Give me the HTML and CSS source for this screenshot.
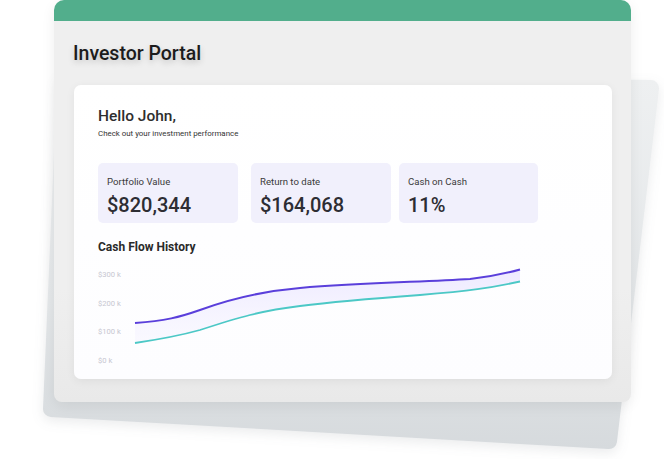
FILE: index.html
```html
<!DOCTYPE html>
<html>
<head>
    <link rel="stylesheet" href="styles.css">
</head>
<body>
    <div class="stage">
        <svg class="backdrop" width="664" height="459" viewBox="0 0 664 459">
            <defs>
                <linearGradient id="backFill" gradientUnits="userSpaceOnUse" x1="0" y1="80" x2="0" y2="449">
                    <stop offset="0" stop-color="#eef0f1"/>
                    <stop offset="0.6" stop-color="#e4e7e9"/>
                    <stop offset="1" stop-color="#d6dadd"/>
                </linearGradient>
            </defs>
            <polygon points="65,83 651,88 609,441 51,409" fill="url(#backFill)" stroke="url(#backFill)" stroke-width="16" stroke-linejoin="round"/>
        </svg>

        <div class="portal-window">
            <div class="portal-header"></div>
            <div class="portal-body">
                <h1 class="portal-title">Investor Portal</h1>

                <div class="dashboard-card">
                    <h2 class="greeting">Hello John,</h2>
                    <p class="greeting-sub">Check out your investment performance</p>

                    <div class="stat-row">
                        <div class="stat-card">
                            <span class="stat-label">Portfolio Value</span>
                            <span class="stat-value">$820,344</span>
                        </div>
                        <div class="stat-card">
                            <span class="stat-label">Return to date</span>
                            <span class="stat-value">$164,068</span>
                        </div>
                        <div class="stat-card stat-card-last">
                            <span class="stat-label">Cash on Cash</span>
                            <span class="stat-value">11%</span>
                        </div>
                    </div>

                    <h3 class="chart-title">Cash Flow History</h3>
                    <div class="chart-row">
                        <div class="chart-axis">
                            <span>$300 k</span>
                            <span>$200 k</span>
                            <span>$100 k</span>
                            <span>$0 k</span>
                        </div>
                        <svg class="chart-svg" width="410" height="110" viewBox="122 262 410 110">
                            <defs>
                                <linearGradient id="bandFill" x1="0" y1="0" x2="0" y2="1">
                                    <stop offset="0" stop-color="#ece8ff" stop-opacity="0.9"/>
                                    <stop offset="1" stop-color="#f4f2ff" stop-opacity="0.4"/>
                                </linearGradient>
                            </defs>
                            <path d="M135 324 C165 322 180 318 200 311 C235 298 265 292 300 289 C360 284 420 283 470 280 C490 278 500 276 520 270.5
                                     L520 282.5 C490 289 470 292 420 296 C380 299 340 302 300 307 C260 312 240 318 200 331 C175 338 155 341 135 344 Z" fill="url(#bandFill)"/>
                            <path d="M135 324 C165 322 180 318 200 311 C235 298 265 292 300 289 C360 284 420 283 470 280 C490 278 500 276 520 270.5" fill="none" stroke="#5a3fdb" stroke-width="2"/>
                            <path d="M135 344 C155 341 175 338 200 331 C240 318 260 312 300 307 C340 302 380 299 420 296 C470 292 490 289 520 282.5" fill="none" stroke="#4cc8c6" stroke-width="1.8"/>
                        </svg>
                    </div>
                </div>
            </div>
        </div>
    </div>
</body>
</html>
```

FILE: styles.css
```css
* {
    margin: 0;
    padding: 0;
    box-sizing: border-box;
}

body {
    font-family: Roboto, "Liberation Sans", Arial, sans-serif;
    background-color: #fff;
}

.stage {
    position: relative;
    width: 664px;
    height: 459px;
    overflow: hidden;
    background: #fff;
}

.backdrop {
    position: absolute;
    left: 0;
    top: 0;
    filter: drop-shadow(0 4px 6px rgba(60, 70, 80, 0.1));
}

.portal-window {
    position: relative;
    z-index: 1;
    margin-left: 54px;
    width: 577px;
    border-radius: 10px;
    box-shadow: 0 4px 14px rgba(0, 0, 0, 0.07);
}

.portal-header {
    height: 21px;
    background-color: #52ae8c;
    border-radius: 10px 10px 0 0;
}

.portal-body {
    height: 381px;
    padding: 21px 19px 0 20px;
    background: linear-gradient(#efefef 70%, #e9e9e9);
    border-radius: 0 0 8px 8px;
}

.portal-title {
    font-size: 19.5px;
    font-weight: 500;
    color: #1c1c1c;
    text-shadow: 0 3px 6px rgba(0, 0, 0, 0.18);
    margin-left: -1px;
}

.dashboard-card {
    margin-top: 20px;
    width: 538px;
    height: 294px;
    padding: 21px 24px 0 24px;
    background: linear-gradient(#ffffff, #fdfdff);
    border-radius: 7px;
    box-shadow: 0 2px 10px rgba(0, 0, 0, 0.06);
}

.greeting {
    font-size: 15.5px;
    font-weight: 500;
    line-height: 20px;
    color: #2e2e2e;
}

.greeting-sub {
    margin-top: 3px;
    font-size: 7.9px;
    line-height: 10px;
    color: #333;
}

.stat-row {
    display: flex;
    gap: 13px;
    margin-top: 24px;
}

.stat-card {
    display: flex;
    flex-direction: column;
    width: 140px;
    height: 60px;
    padding: 13px 9px 0 9px;
    background-color: #f1f0fc;
    border-radius: 5px;
}

.stat-card-last {
    margin-left: -5px;
    width: 139px;
}

.stat-label {
    font-size: 9.6px;
    line-height: 12px;
    color: #3a3a3a;
}

.stat-value {
    margin-top: 5px;
    font-size: 20px;
    font-weight: 500;
    color: #2d2d33;
}

.chart-title {
    margin-top: 17px;
    font-size: 12px;
    font-weight: 700;
    color: #2a2a2a;
}

.chart-row {
    display: flex;
    margin-top: 7px;
    height: 110px;
}

.chart-axis {
    display: flex;
    flex-direction: column;
    gap: 19.5px;
    width: 24px;
    padding-top: 9px;
    font-size: 7.6px;
    line-height: 9px;
    color: #c7c7d1;
    white-space: nowrap;
}

.chart-svg {
    display: block;
}
```
